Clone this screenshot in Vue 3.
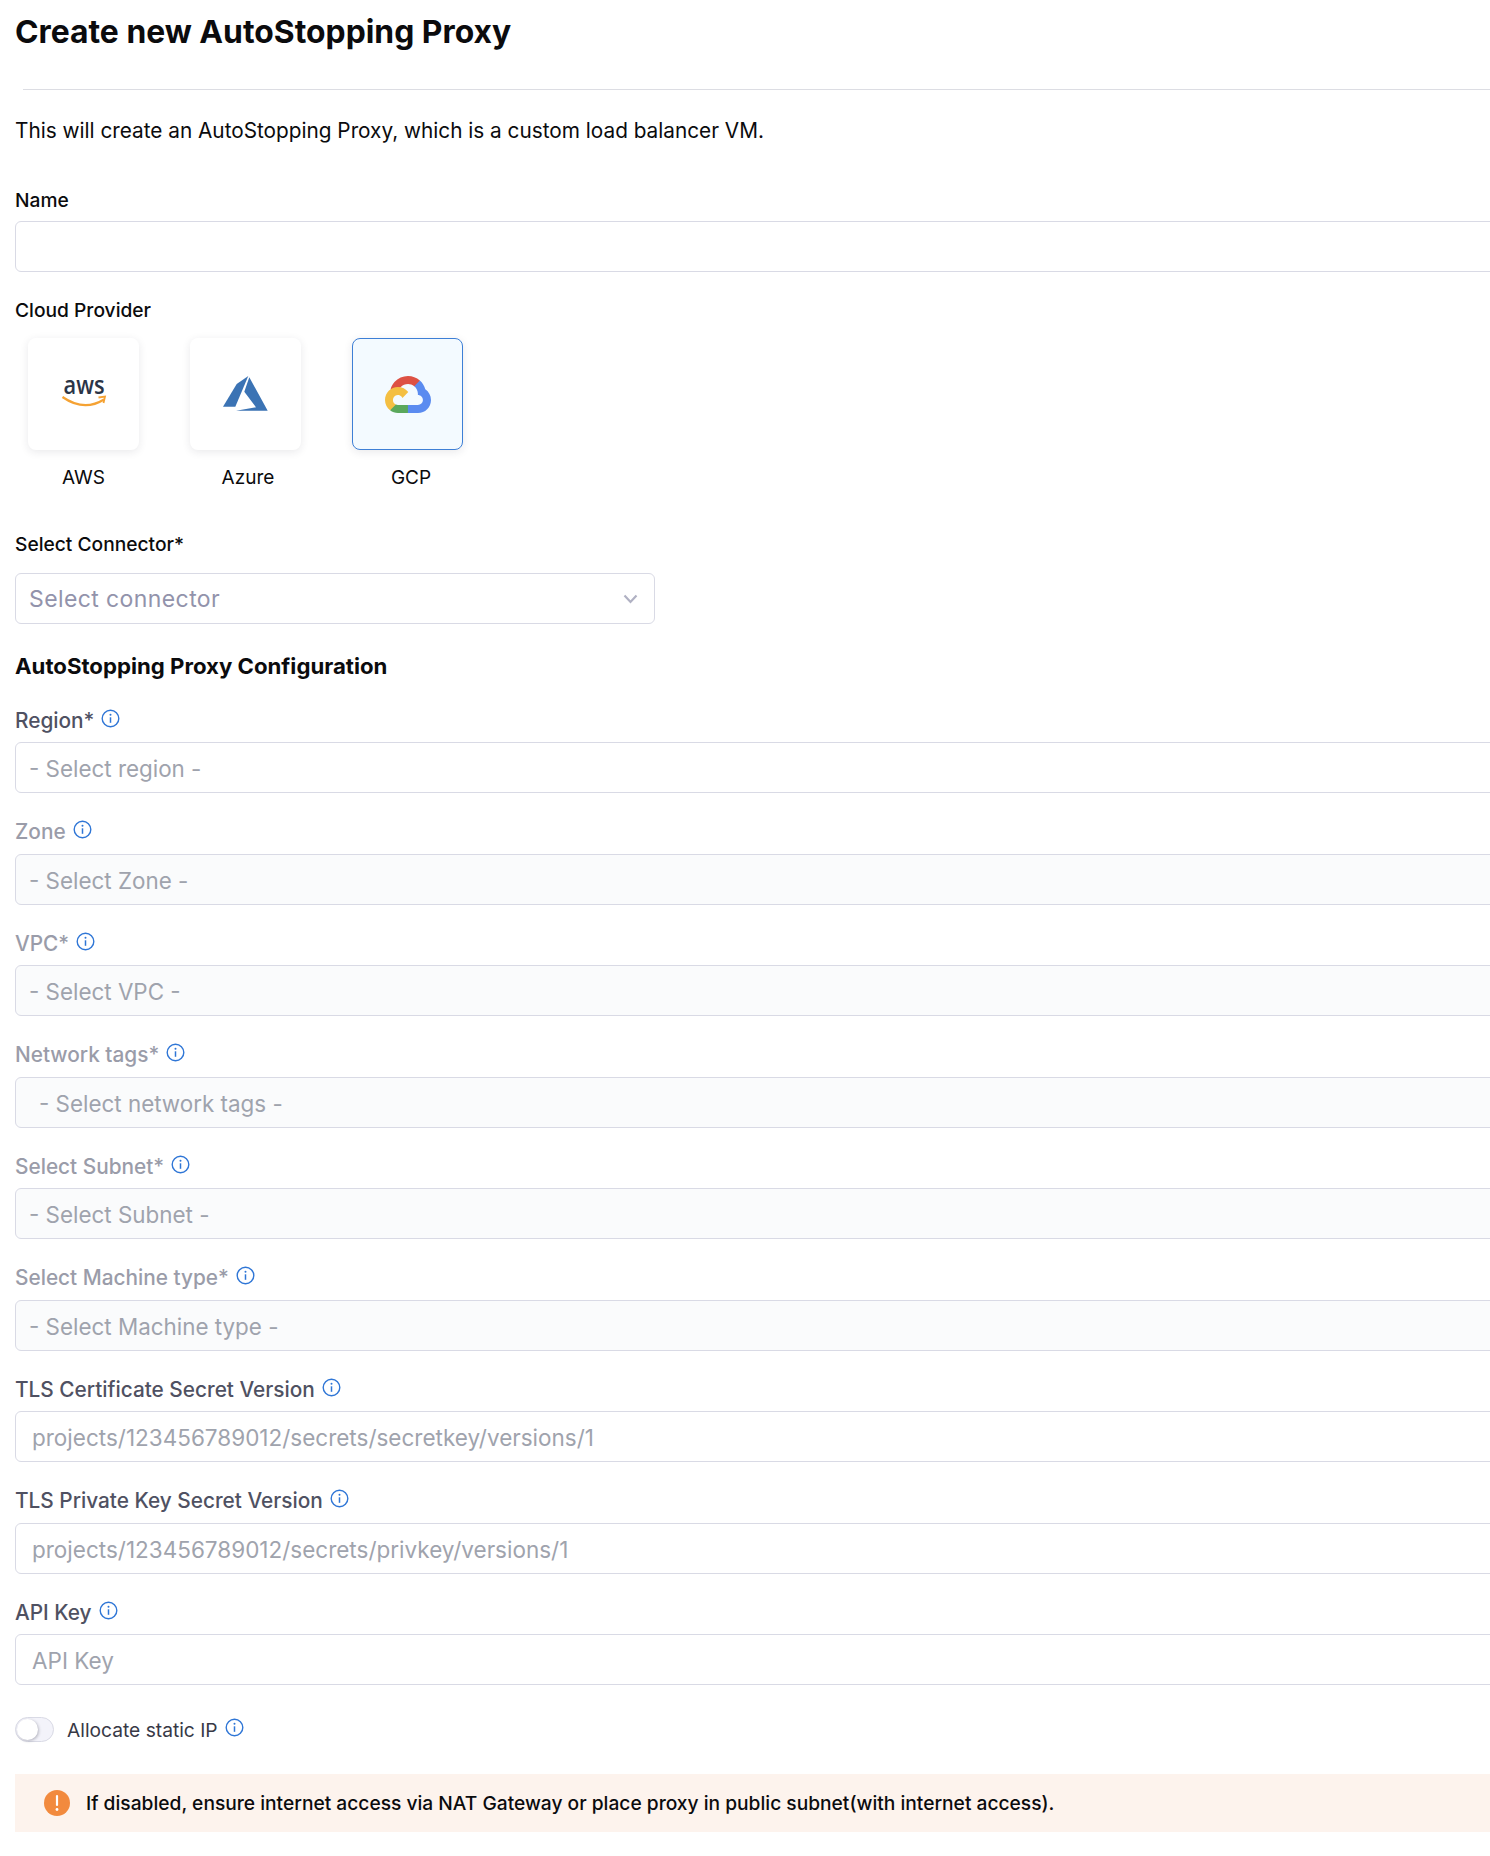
<script setup>
const fields = [
  { label: 'Region*', ph: '- Select region -', state: 'on' },
  { label: 'Zone', ph: '- Select Zone -', state: 'off' },
  { label: 'VPC*', ph: '- Select VPC -', state: 'off' },
  { label: 'Network tags*', ph: '- Select network tags -', state: 'off', tags: true },
  { label: 'Select Subnet*', ph: '- Select Subnet -', state: 'off' },
  { label: 'Select Machine type*', ph: '- Select Machine type -', state: 'off' },
  { label: 'TLS Certificate Secret Version', ph: 'projects/123456789012/secrets/secretkey/versions/1', state: 'on', text: true },
  { label: 'TLS Private Key Secret Version', ph: 'projects/123456789012/secrets/privkey/versions/1', state: 'on', text: true },
  { label: 'API Key', ph: 'API Key', state: 'on', text: true },
]
</script>

<template>
  <main class="page">
    <h1 class="title">Create new AutoStopping Proxy</h1>
    <div class="rule"></div>
    <p class="intro">This will create an AutoStopping Proxy, which is a custom load balancer VM.</p>

    <label class="label-dark name-label">Name</label>
    <div class="box name-box"></div>

    <label class="label-dark cloud-label">Cloud Provider</label>
    <div class="providers">
      <div class="provider">
        <div class="card">
          <svg class="aws" width="64" height="64" viewBox="-10 0 64 64">
            <text x="22" y="32" text-anchor="middle" font-family="Open Sans" font-size="25" font-weight="600" fill="#2b3547" textLength="41" lengthAdjust="spacingAndGlyphs">aws</text>
            <path d="M0.500 35Q22 50 42 37.500" fill="none" stroke="#f5a233" stroke-width="2.200"/>
            <path d="M36.500 35.500L43 34.500L41.500 41" fill="none" stroke="#f5a233" stroke-width="1.800"/>
          </svg>
        </div>
        <span class="pname">AWS</span>
      </div>
      <div class="provider">
        <div class="card">
          <svg width="46" height="36" viewBox="0 0 46 36">
            <path d="M0 30.700L13.700 8L25.300 0L12.300 30.700Z" fill="#3b73b4"/>
            <path d="M26.300 1.300L44.700 34.700L13 34.700L33 31.300L21.300 15.700Z" fill="#3b73b4"/>
          </svg>
        </div>
        <span class="pname azure">Azure</span>
      </div>
      <div class="provider">
        <div class="card active">
          <svg width="46" height="37" viewBox="0 0 256 206">
            <path fill="#dd5144" d="M170.25 56.82L192.5 34.57L193.99 25.2C153.44-11.68 88.98-7.5 52.42 33.92C42.27 45.42 34.73 59.76 30.72 74.57L38.69 73.45L83.19 66.11L86.63 62.6C106.42 40.85 139.9 37.93 162.76 56.43L170.25 56.82Z"/>
            <path fill="#5a8bf0" d="M224.2 73.92C219.09 55.08 208.59 38.15 193.99 25.2L162.76 56.43C175.94 67.2 183.46 83.44 183.13 100.47V106.01C198.49 106.01 210.93 118.45 210.93 133.81C210.93 149.16 198.49 161.29 183.13 161.29H127.46L122 167.22V200.56L127.46 205.8H183.13C223.06 206.11 255.69 174.3 256 134.37C256.19 110.17 244.25 87.48 224.2 73.92Z"/>
            <path fill="#5aa85c" d="M71.87 205.8H127.46V161.29H71.87C67.91 161.29 64.07 160.44 60.47 158.79L52.58 161.21L30.18 183.46L28.22 191.04C40.79 200.53 56.12 205.86 71.87 205.8Z"/>
            <path fill="#f4bf42" d="M71.87 61.43C31.94 61.66-.24 94.23 0 134.16C.13 156.46 10.55 177.45 28.22 191.04L60.47 158.79C46.48 152.47 40.26 136.01 46.58 122.02C52.9 108.03 69.37 101.81 83.36 108.13C89.52 110.91 94.46 115.85 97.25 122.02L129.49 89.77C115.77 71.83 94.45 61.34 71.87 61.43Z"/>
          </svg>
        </div>
        <span class="pname gcp">GCP</span>
      </div>
    </div>

    <label class="label-dark connector-label">Select Connector*</label>
    <div class="box connector">
      <span>Select connector</span>
      <svg width="15" height="10" viewBox="0 0 15 10"><path d="M1.500 1.500L7.500 8L13.500 1.500" fill="none" stroke="#b0b1c3" stroke-width="2.200"/></svg>
    </div>

    <h2 class="section">AutoStopping Proxy Configuration</h2>

    <div class="fields">
      <div v-for="f in fields" :key="f.label" class="field" :class="f.state">
        <div class="flabel">
          <span>{{ f.label }}</span>
          <svg class="info" width="19" height="19" viewBox="0 0 19 19">
            <circle cx="9.500" cy="9.500" r="8.300" fill="none" stroke="#2f76d6" stroke-width="1.400"/>
            <circle cx="9.500" cy="5.800" r="1" fill="#2f76d6"/>
            <path d="M9.500 8.300V13.800" stroke="#2f76d6" stroke-width="1.500"/>
          </svg>
        </div>
        <div class="box fbox" :class="{ tags: f.tags, text: f.text }">{{ f.ph }}</div>
      </div>
    </div>

    <div class="toggle-row">
      <span class="toggle"><span class="knob"></span></span>
      <span class="tlabel">Allocate static IP</span>
      <svg class="info" width="19" height="19" viewBox="0 0 19 19">
        <circle cx="9.500" cy="9.500" r="8.300" fill="none" stroke="#2f76d6" stroke-width="1.400"/>
        <circle cx="9.500" cy="5.800" r="1" fill="#2f76d6"/>
        <path d="M9.500 8.300V13.800" stroke="#2f76d6" stroke-width="1.500"/>
      </svg>
    </div>

    <div class="banner">
      <svg width="26" height="26" viewBox="0 0 26 26">
        <circle cx="13" cy="13" r="13" fill="#f28a3e"/>
        <path d="M13 6V15" stroke="#fff" stroke-width="2.200" stroke-linecap="round"/>
        <circle cx="13" cy="19.500" r="1.400" fill="#fff"/>
      </svg>
      <span>If disabled, ensure internet access via NAT Gateway or place proxy in public subnet(with internet access).</span>
    </div>
  </main>
</template>

<style>
html, body { margin: 0; background: #fff; overflow: hidden; }
</style>

<style scoped>
.page {
  width: 1490px;
  height: 1856px;
  overflow: hidden;
  padding-left: 15px;
  box-sizing: border-box;
  font-family: Inter, "Liberation Sans", sans-serif;
  color: #0b0b0d;
}
.title {
  margin: 0;
  padding-top: 12px;
  font-size: 31.850px;
  line-height: 40px;
  font-weight: 700;
}
.rule {
  margin: 37px 0 0 8px;
  height: 1px;
  width: 1600px;
  background: #dcdde3;
}
.intro {
  margin: 29px 0 0;
  font-size: 20.770px;
  line-height: 24px;
}
.label-dark {
  display: block;
  font-size: 19.200px;
  font-weight: 500;
  line-height: 24px;
}
.name-label { margin-top: 45px; }
.box {
  width: 1600px;
  height: 51px;
  box-sizing: border-box;
  border: 1px solid #d9dae5;
  border-radius: 6px;
  background: #fff;
}
.name-box { margin-top: 9px; }
.cloud-label { margin-top: 26px; }
.providers {
  display: flex;
  gap: 51px;
  margin: 16px 0 0 13px;
}
.provider {
  width: 111px;
  display: flex;
  flex-direction: column;
  align-items: center;
}
.card {
  width: 111px;
  height: 112px;
  box-sizing: border-box;
  display: flex;
  align-items: center;
  justify-content: center;
  background: #fff;
  border-radius: 8px;
  box-shadow: 0 2px 8px rgba(40, 41, 61, 0.1);
}
.card.active {
  background: #f3faff;
  border: 1px solid #3d7fd6;
}
.pname {
  margin-top: 16px;
  font-size: 19px;
  line-height: 24px;
}
.pname.azure { margin-left: 5px; }
.pname.gcp { margin-left: 7px; }
.connector-label { margin-top: 42px; }
.connector {
  width: 640px;
  margin-top: 17px;
  padding: 0 16px 0 13px;
  display: flex;
  align-items: center;
  justify-content: space-between;
  font-size: 23px;
  letter-spacing: 0.4px;
  color: #9293ab;
}
.section {
  margin: 29px 0 0;
  font-size: 22.200px;
  line-height: 26px;
  font-weight: 700;
}
.fields {
  margin-top: 26px;
  display: flex;
  flex-direction: column;
  gap: 23.520px;
}
.flabel {
  display: flex;
  align-items: center;
  gap: 7px;
  height: 30px;
  font-size: 20.800px;
  font-weight: 500;
  color: #4f5162;
}
.flabel .info { transform: translateY(-2px); }
.field .fbox {
  margin-top: 7px;
  padding-left: 13px;
  line-height: 51px;
  font-size: 22.400px;
  color: #9fa3ad;
}
.field.off .flabel { color: #9a9ca9; }
.field.off .fbox { background: #fafbfc; }
.fbox.tags { padding-left: 23px; }
.fbox.text { padding-left: 16px; font-size: 22.500px; }
.toggle-row {
  display: flex;
  align-items: center;
  margin-top: 32px;
  height: 25px;
}
.toggle {
  position: relative;
  width: 39px;
  height: 25px;
  box-sizing: border-box;
  border: 1px solid #d9dae5;
  border-radius: 13px;
  background: #f3f3fa;
}
.knob {
  position: absolute;
  left: 1px;
  top: 1px;
  width: 21px;
  height: 21px;
  border-radius: 50%;
  background: #fff;
  box-shadow: 1px 1px 3px rgba(40, 41, 61, 0.3);
}
.tlabel {
  margin: 0 7px 0 13px;
  font-size: 19.200px;
  color: #383946;
}
.toggle-row .info { transform: translateY(-2px); }
.banner {
  margin-top: 32px;
  width: 1600px;
  height: 58px;
  padding-left: 29px;
  box-sizing: border-box;
  display: flex;
  align-items: center;
  gap: 16px;
  background: #fdf3ed;
  font-size: 19.200px;
  font-weight: 500;
}
</style>
